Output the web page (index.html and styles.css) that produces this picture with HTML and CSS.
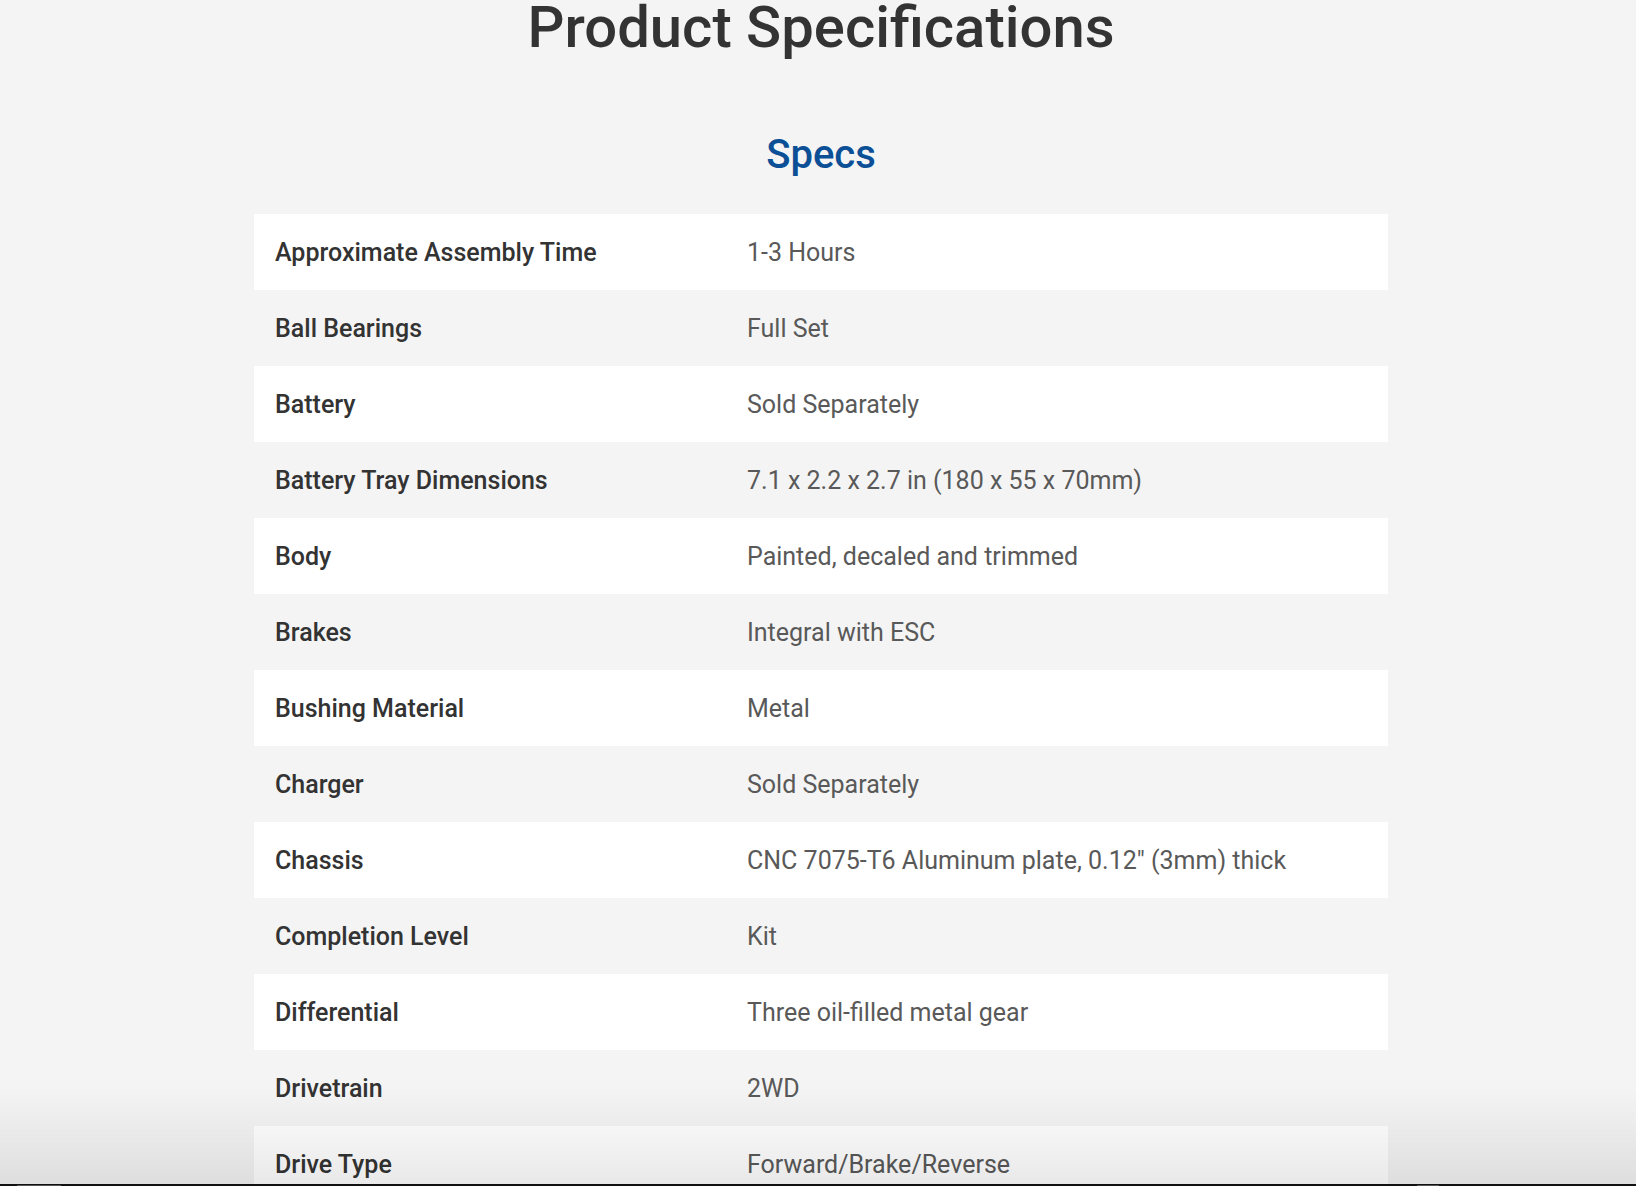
FILE: index.html
```html
<!DOCTYPE html>
<html lang="en">
<head>
<meta charset="utf-8">
<title>Product Specifications</title>
<link rel="stylesheet" href="styles.css">
</head>
<body>
<main class="page">
  <h1 class="title">Product Specifications</h1>
  <section class="specs">
    <h2 class="specs-heading">Specs</h2>
    <div class="spec-table">
      <div class="spec-row"><div class="spec-label">Approximate Assembly Time</div><div class="spec-value">1-3 Hours</div></div>
      <div class="spec-row"><div class="spec-label">Ball Bearings</div><div class="spec-value">Full Set</div></div>
      <div class="spec-row"><div class="spec-label">Battery</div><div class="spec-value">Sold Separately</div></div>
      <div class="spec-row"><div class="spec-label">Battery Tray Dimensions</div><div class="spec-value">7.1 x 2.2 x 2.7 in (180 x 55 x 70mm)</div></div>
      <div class="spec-row"><div class="spec-label">Body</div><div class="spec-value">Painted, decaled and trimmed</div></div>
      <div class="spec-row"><div class="spec-label">Brakes</div><div class="spec-value">Integral with ESC</div></div>
      <div class="spec-row"><div class="spec-label">Bushing Material</div><div class="spec-value">Metal</div></div>
      <div class="spec-row"><div class="spec-label">Charger</div><div class="spec-value">Sold Separately</div></div>
      <div class="spec-row"><div class="spec-label">Chassis</div><div class="spec-value">CNC 7075-T6 Aluminum plate, 0.12" (3mm) thick</div></div>
      <div class="spec-row"><div class="spec-label">Completion Level</div><div class="spec-value">Kit</div></div>
      <div class="spec-row"><div class="spec-label">Differential</div><div class="spec-value">Three oil-filled metal gear</div></div>
      <div class="spec-row"><div class="spec-label">Drivetrain</div><div class="spec-value">2WD</div></div>
      <div class="spec-row"><div class="spec-label">Drive Type</div><div class="spec-value">Forward/Brake/Reverse</div></div>
      <div class="spec-row"><div class="spec-label">Electronic Speed Control</div><div class="spec-value">Sold Separately</div></div>
    </div>
  </section>
</main>
<div class="bottom-shade"></div>
<div class="bottom-bar"><span class="bar-seg bar-seg-left"></span><span class="bar-seg bar-seg-right"></span></div>
</body>
</html>
```

FILE: styles.css
```css
html, body {
  margin: 0;
  padding: 0;
  background: #f4f4f4;
  overflow: hidden;
}

body {
  font-family: Roboto, "Liberation Sans", Arial, sans-serif;
  color: #333333;
}

.page {
  padding-left: 6px;
}

.title {
  margin: -2px 0 0;
  font-size: 58px;
  line-height: 58px;
  font-weight: 500;
  color: #333333;
  text-align: center;
}

.specs {
  max-width: 1134px;
  margin: 0 auto;
}

.specs-heading {
  margin: 79px 0 39px;
  font-size: 40px;
  line-height: 40px;
  font-weight: 500;
  color: #0b4f96;
  text-align: center;
}

.spec-table {
  display: flex;
  flex-direction: column;
}

.spec-row {
  display: grid;
  grid-template-columns: 493px 1fr;
  align-items: center;
  height: 76px;
  box-sizing: border-box;
  font-size: 25px;
}

.spec-row:nth-child(odd) {
  background: #ffffff;
}

.spec-label {
  padding-left: 21px;
  font-weight: 500;
  color: #333333;
}

.spec-value {
  font-weight: 400;
  color: #595959;
}

.bottom-shade {
  position: fixed;
  left: 0;
  right: 0;
  bottom: 2px;
  height: 96px;
  background: linear-gradient(to bottom, rgba(0, 0, 0, 0) 0%, rgba(0, 0, 0, 0.085) 100%);
  pointer-events: none;
}

.bottom-bar {
  position: fixed;
  left: 0;
  right: 0;
  bottom: 0;
  height: 2px;
  background: #111111;
}

.bar-seg {
  position: absolute;
  top: 1px;
  height: 1px;
  background: #555555;
}

.bar-seg-left {
  left: 17px;
  width: 44px;
}

.bar-seg-right {
  left: 1417px;
  width: 22px;
}
```
